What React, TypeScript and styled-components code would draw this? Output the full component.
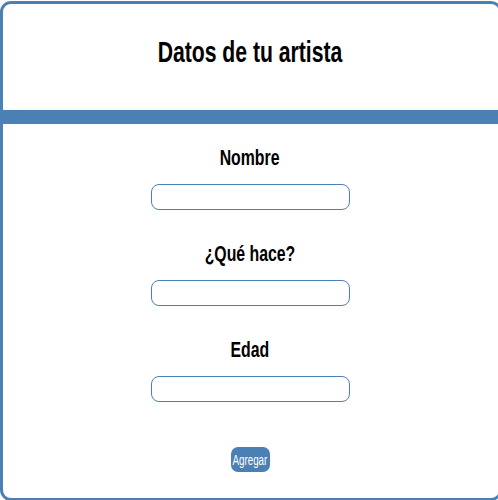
import styled, { createGlobalStyle } from 'styled-components';

const GlobalStyle = createGlobalStyle`
  html, body {
    margin: 0;
    padding: 0;
    background: #fff;
    overflow: hidden;
  }
  body {
    font-family: "Liberation Sans", Arial, sans-serif;
  }
`;

const blue = '#4b80b4';

const Card = styled.div`
  box-sizing: border-box;
  width: 502px;
  height: 500px;
  margin-top: 1px;
  padding-right: 2px;
  border: 3px solid ${blue};
  border-radius: 11px;
  overflow: hidden;
  background: #fff;
`;

const Header = styled.header`
  box-sizing: border-box;
  height: 106px;
  padding-top: 31px;
  text-align: center;
`;

const Title = styled.h1`
  margin: 0;
  font-size: 29px;
  line-height: 34px;
  font-weight: bold;
  color: #000;
  transform: scaleX(0.73);
`;

const Band = styled.div`
  height: 14px;
  background: ${blue};
  margin: 0 -5px 0 -3px;
`;

const Form = styled.form`
  display: flex;
  flex-direction: column;
  align-items: center;
  padding-top: 21px;
`;

const Field = styled.div`
  display: flex;
  flex-direction: column;
  align-items: center;
  margin-bottom: 31px;

  &:last-of-type {
    margin-bottom: 45px;
  }
`;

const Label = styled.label`
  display: block;
  font-size: 22px;
  line-height: 26px;
  font-weight: bold;
  color: #000;
  margin-bottom: 13px;
  transform: scaleX(0.72);
  white-space: nowrap;
`;

const Input = styled.input`
  box-sizing: border-box;
  width: 199px;
  height: 26px;
  border: 1px solid ${blue};
  border-radius: 8px;
  outline: none;
  background: #fff;
  padding: 0 8px;
`;

const Button = styled.button`
  box-sizing: border-box;
  width: 39px;
  height: 25px;
  padding: 0;
  border: none;
  border-radius: 7px;
  background: ${blue};
  color: #fff;
  display: flex;
  align-items: center;
  justify-content: center;
  font-family: "Liberation Sans", Arial, sans-serif;
  font-size: 14px;
`;

const ButtonText = styled.span`
  display: inline-block;
  white-space: nowrap;
  transform: scaleX(0.7);
`;

const fields = ['Nombre', '¿Qué hace?', 'Edad'];

export default function App() {
  return (
    <>
      <GlobalStyle />
      <Card>
        <Header>
          <Title>Datos de tu artista</Title>
        </Header>
        <Band />
        <Form onSubmit={(e) => e.preventDefault()}>
          {fields.map((f) => (
            <Field key={f}>
              <Label>{f}</Label>
              <Input type="text" />
            </Field>
          ))}
          <Button type="submit">
            <ButtonText>Agregar</ButtonText>
          </Button>
        </Form>
      </Card>
    </>
  );
}
